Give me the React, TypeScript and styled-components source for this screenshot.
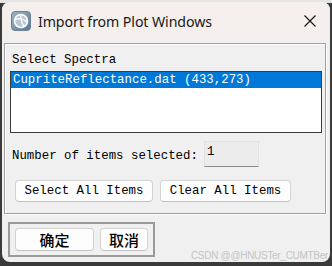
import styled, { createGlobalStyle } from "styled-components";

const Global = createGlobalStyle`
	html, body {
		margin: 0;
		padding: 0;
		width: 332px;
		height: 266px;
		overflow: hidden;
		background: linear-gradient(to bottom, #e4e4e4 0 3px, #3a3a3a 3px);
	}
`;

const Window = styled.div`
	position: relative;
	box-sizing: border-box;
	width: 328px;
	height: 260px;
	margin: 2px 0 0 2px;
	border-radius: 8px;
	overflow: hidden;
	background: #f0f0f0;
	display: flex;
	flex-direction: column;
	font-family: "Liberation Mono", "Noto Sans CJK SC", monospace;
	font-size: 12.4px;
	color: #000;
`;

const TitleBar = styled.div`
	height: 38px;
	flex: none;
	display: flex;
	align-items: center;
	padding: 0 0 0 9px;
	background: #f4efec;
`;

const Title = styled.span`
	margin-left: 7px;
	font-family: "Noto Sans", "Open Sans", sans-serif;
	font-size: 14.2px;
	color: #1a1a1a;
	flex: 1;
	letter-spacing: -0.1px;
`;

const CloseButton = styled.div`
	width: 30px;
	height: 38px;
	display: flex;
	align-items: center;
	justify-content: center;
	margin-right: 5px;
`;

const Group = styled.div`
	box-sizing: border-box;
	margin: 3px 0 0 2px;
	width: 322px;
	height: 171px;
	border: 1px solid #a0a0a0;
	box-shadow: inset 1px 1px 0 #fff, 1px 1px 0 #fff;
	padding: 9px 4px 0 5px;
	display: flex;
	flex-direction: column;
`;

const Label = styled.div`
	padding-left: 2px;
	line-height: 14px;
	height: 18px;
`;

const ListBox = styled.div`
	box-sizing: border-box;
	height: 62px;
	width: 312px;
	border: 1px solid #3c3c3c;
	background: #fff;
	display: flex;
	flex-direction: column;
`;

const ListItem = styled.div<{ $selected?: boolean }>`
	height: 16px;
	line-height: 16px;
	padding-left: 2px;
	background: ${({ $selected }) => ($selected ? "#0078d7" : "transparent")};
	color: ${({ $selected }) => ($selected ? "#fff" : "#000")};
	white-space: nowrap;
`;

const CountRow = styled.div`
	display: flex;
	align-items: flex-start;
	margin-top: 8px;
	padding-left: 2px;
`;

const CountLabel = styled.span`
	margin-top: 8px;
	line-height: 14px;
	width: 192px;
	white-space: nowrap;
`;

const CountField = styled.div`
	box-sizing: border-box;
	width: 55px;
	height: 26px;
	background: #ececec;
	border: 1px solid #e2e2e2;
	border-bottom-color: #8c8c8c;
	padding: 3px 0 0 2px;
	line-height: 14px;
`;

const ButtonRow = styled.div`
	display: flex;
	gap: 7px;
	margin: 13px 0 0 5px;
`;

const Button = styled.button<{ $w: number; $cjk?: boolean }>`
	box-sizing: border-box;
	width: ${({ $w }) => $w}px;
	height: ${({ $cjk }) => ($cjk ? 23 : 22)}px;
	padding: 0;
	border: 1px solid #d3d3d3;
	border-bottom-color: #c2c2c2;
	border-radius: 4px;
	background: #fdfdfd;
	color: #000;
	font-family: ${({ $cjk }) =>
		$cjk ? '"Noto Sans CJK SC", sans-serif' : '"Liberation Mono", monospace'};
	font-size: ${({ $cjk }) => ($cjk ? "15px" : "12.4px")};
	font-weight: ${({ $cjk }) => ($cjk ? 500 : 400)};
	line-height: 1;
`;

const ActionBox = styled.div`
	box-sizing: border-box;
	margin: 8px 0 0 6px;
	width: 147px;
	height: 35px;
	border: 2px solid #9a9a9a;
	padding: 4px 0 0 5px;
	display: flex;
	gap: 6px;
`;

const Watermark = styled.div`
	position: absolute;
	right: 2px;
	bottom: 1px;
	font-family: "Liberation Sans", Arial, sans-serif;
	font-size: 10px;
	line-height: 11px;
	color: #c4c4c4;
	letter-spacing: -0.3px;
	white-space: nowrap;
`;

function AppIcon() {
	return (
		<svg width="20" height="20" viewBox="0 0 20 20">
			<defs>
				<linearGradient id="ig" x1="0" y1="0" x2="1" y2="1">
					<stop offset="0" stopColor="#9fb4c6" />
					<stop offset="1" stopColor="#5d7891" />
				</linearGradient>
			</defs>
			<rect x="0.5" y="0.5" width="19" height="19" rx="3.5" fill="url(#ig)" stroke="#6b8196" />
			<circle cx="10" cy="10" r="6.5" fill="#b9c8d4" stroke="#fff" strokeWidth="1.6" />
			<path d="M4 8.5 C8 7 13 8 16 11" fill="none" stroke="#fff" strokeWidth="1.4" />
			<path d="M10 3.5 C9 7 11 12 13 16" fill="none" stroke="#fff" strokeWidth="1.4" />
		</svg>
	);
}

export default function App() {
	return (
		<>
			<Global />
			<Window>
				<TitleBar>
					<AppIcon />
					<Title>Import from Plot Windows</Title>
					<CloseButton>
						<svg width="12" height="12" viewBox="0 0 12 12">
							<path d="M0.5 0.5 L11.5 11.5 M11.5 0.5 L0.5 11.5" stroke="#111" strokeWidth="1.1" />
						</svg>
					</CloseButton>
				</TitleBar>
				<Group>
					<Label>Select Spectra</Label>
					<ListBox>
						<ListItem $selected>CupriteReflectance.dat (433,273)</ListItem>
					</ListBox>
					<CountRow>
						<CountLabel>Number of items selected:</CountLabel>
						<CountField>1</CountField>
					</CountRow>
					<ButtonRow>
						<Button $w={138}>Select All Items</Button>
						<Button $w={131}>Clear All Items</Button>
					</ButtonRow>
				</Group>
				<ActionBox>
					<Button $w={79} $cjk>确定</Button>
					<Button $w={48} $cjk>取消</Button>
				</ActionBox>
				<Watermark>CSDN @@HNUSTer_CUMTBer</Watermark>
			</Window>
		</>
	);
}
